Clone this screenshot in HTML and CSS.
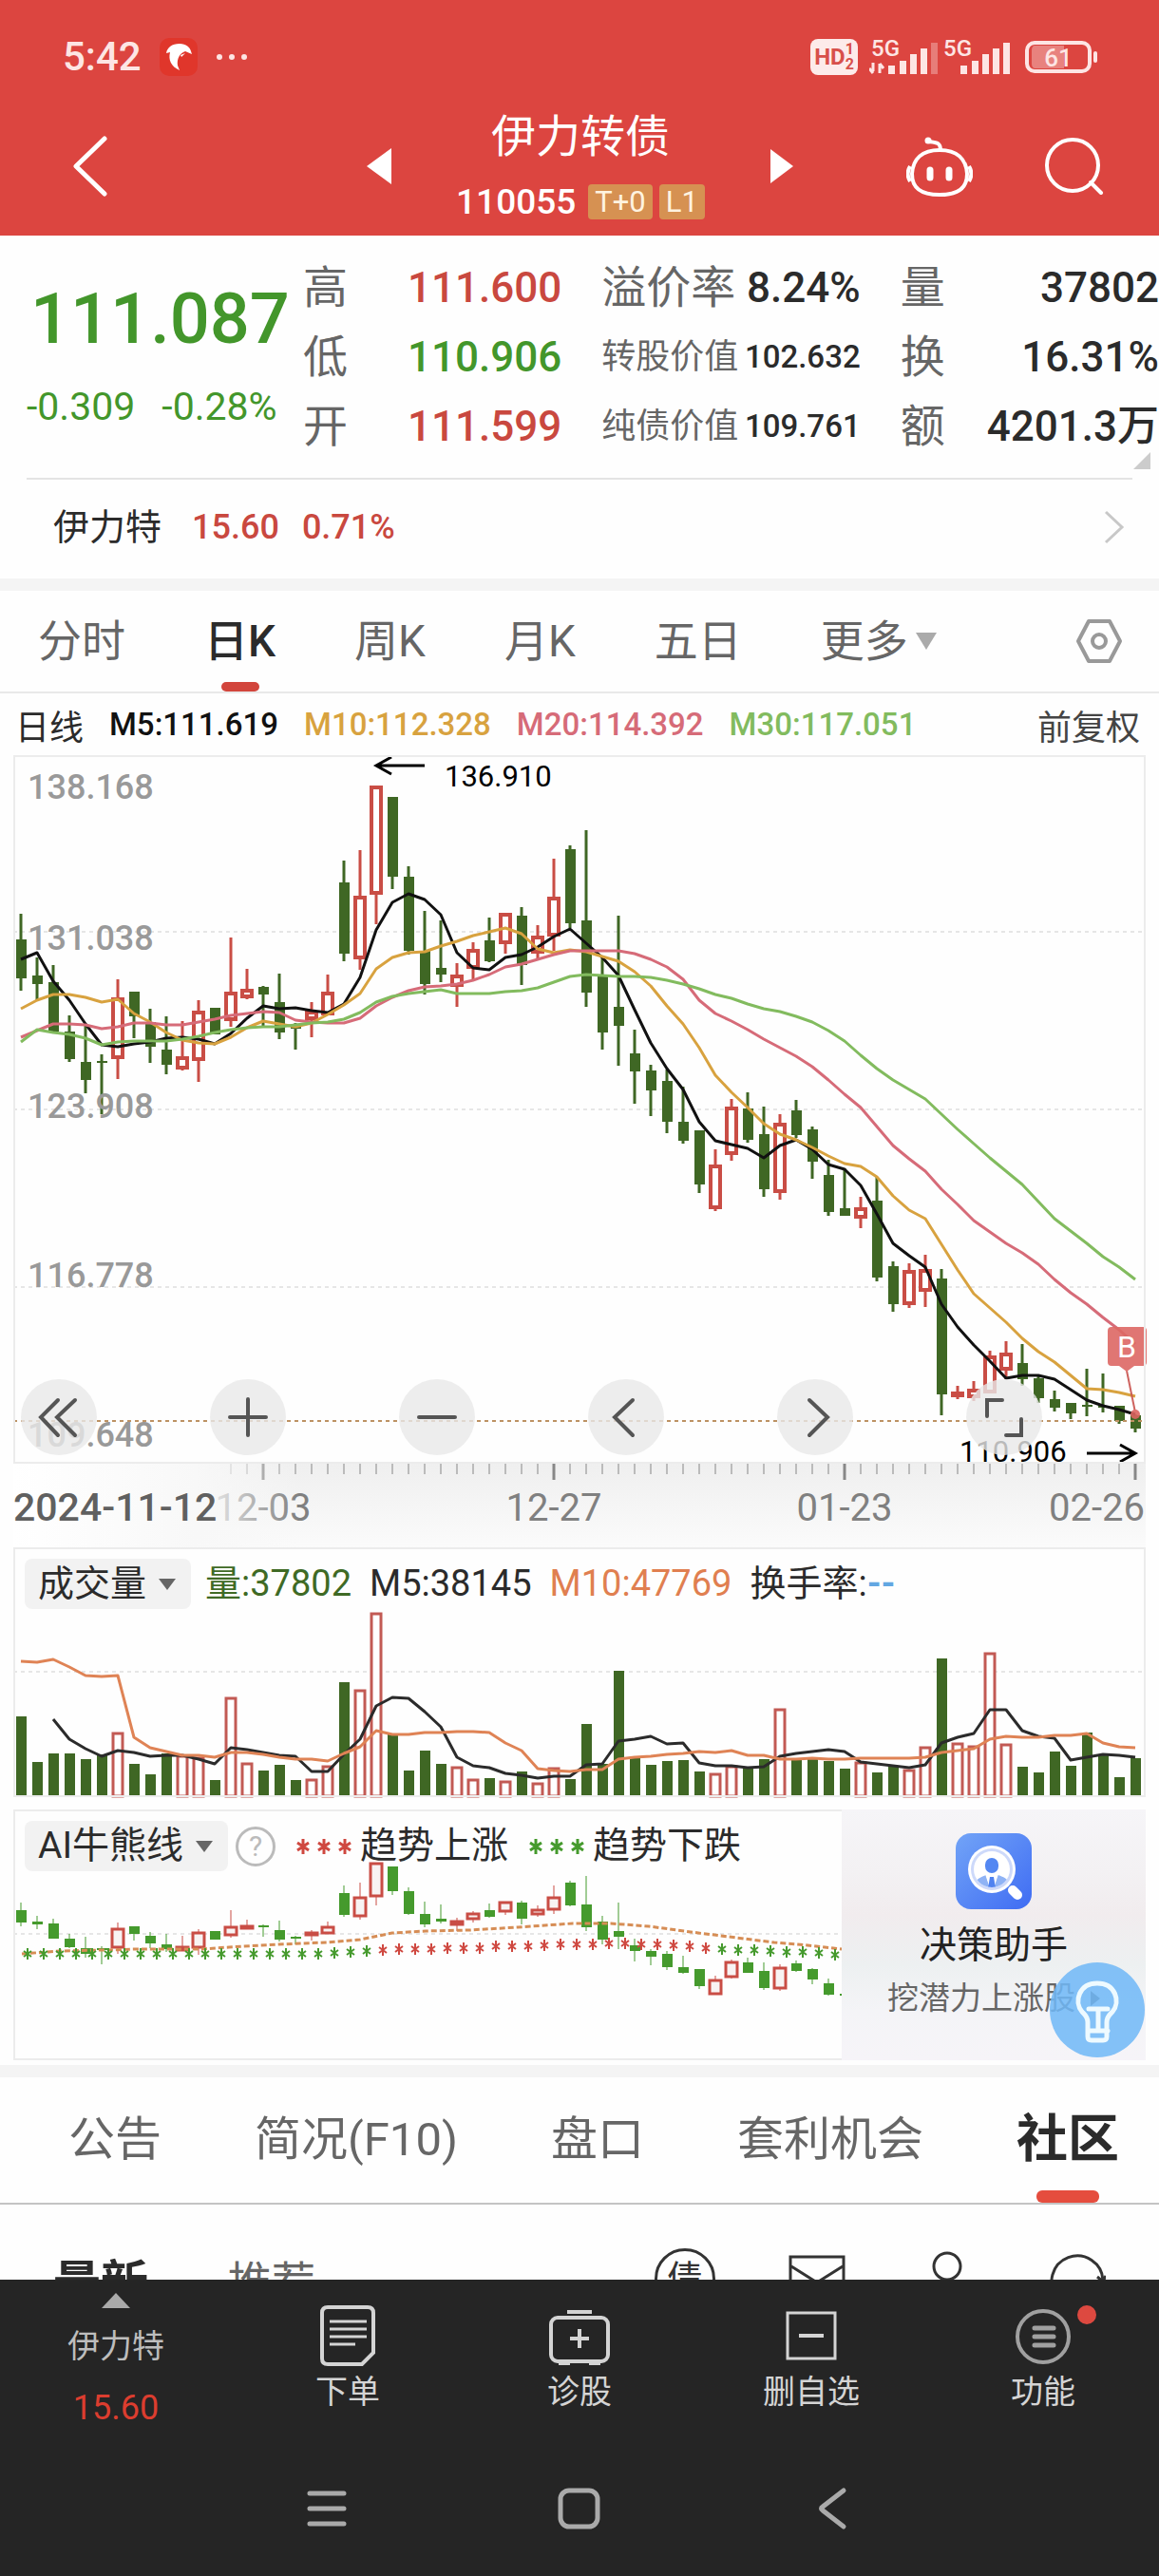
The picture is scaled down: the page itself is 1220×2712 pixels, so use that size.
FILE: index.html
```html
<!DOCTYPE html>
<html lang="zh-CN">
<head>
<meta charset="utf-8">
<meta name="viewport" content="width=device-width, initial-scale=1">
<title>伊力转债 110055</title>
<link rel="stylesheet" href="styles.css">
</head>
<body>
<div class="app">
  <header class="top">
    <div class="status">
      <div class="status-side">
        <span class="clock">5:42</span>
        <svg width="40" height="40" viewBox="0 0 40 40"><rect width="40" height="40" rx="10" fill="#e0362b"/><path d="M7 16C8 10 13 6 21 6c7 0 11 4 12 8l1 3-7-3c-6 2-9 8-8 15l2 5C12 30 9 23 11 15z" fill="#fff"/><path d="M22 18l5-2-4 4z" fill="#fff"/></svg>
        <svg width="34" height="8" viewBox="0 0 34 8" fill="#fde5e4"><circle cx="4" cy="4" r="3"/><circle cx="17" cy="4" r="3"/><circle cx="30" cy="4" r="3"/></svg>
      </div>
      <div class="status-side">
        <span class="hd">HD<span class="hd-num"><i>1</i><i>2</i></span></span>
        <span class="net"><b>5G</b>
          <svg width="72" height="38" viewBox="0 0 72 38" fill="#fde5e4"><path d="M4 25v9M0 31l4 5M11 36V26M11 26l4 5" stroke="#fde5e4" stroke-width="3" fill="none"/><rect x="20" y="28" width="7" height="9"/><rect x="32" y="23" width="7" height="14"/><rect x="43" y="16" width="7" height="21"/><rect x="54" y="10" width="7" height="27"/><rect x="65" y="4" width="7" height="33" opacity=".35"/></svg></span>
        <span class="net net-b"><b>5G</b>
          <svg width="72" height="38" viewBox="0 0 72 38" fill="#fde5e4"><rect x="20" y="28" width="7" height="9"/><rect x="32" y="23" width="7" height="14"/><rect x="43" y="16" width="7" height="21"/><rect x="54" y="10" width="7" height="27"/><rect x="65" y="4" width="7" height="33"/></svg></span>
        <span class="battery">61</span>
      </div>
    </div>
    <div class="titlebar">
      <button class="icon-btn back" aria-label="返回"><svg width="36" height="64" viewBox="0 0 36 64"><path d="M33 3L3 32l30 29" fill="none" stroke="#fff" stroke-width="5" stroke-linecap="round" stroke-linejoin="round"/></svg></button>
      <div class="title-mid">
        <button class="icon-btn" aria-label="上一只"><svg width="26" height="38" viewBox="0 0 26 38"><path d="M26 0v38L0 19z" fill="#fff"/></svg></button>
        <div class="title-text">
          <h1>伊力转债</h1>
          <p><span>110055</span><em>T+0</em><em>L1</em></p>
        </div>
        <button class="icon-btn" aria-label="下一只"><svg width="26" height="38" viewBox="0 0 26 38"><path d="M1 1v36l24-18z" fill="#fff"/></svg></button>
      </div>
      <div class="title-right">
        <button class="icon-btn" aria-label="智能助手"><svg width="70" height="66" viewBox="0 0 70 66" fill="none" stroke="#fff" stroke-width="4"><path d="M36 16C36 8 32 8 24 7"/><circle cx="23" cy="6" r="3.500" fill="#fff" stroke="none"/><path d="M35 16c18 0 28 9 29 25 0 15-9 22-29 22S6 56 6 41c1-16 11-25 29-25z"/><path d="M4 33c-3 5-3 11 0 16M66 33c3 5 3 11 0 16" stroke-width="4"/><path d="M25 37v8M45 37v8" stroke-width="7" stroke-linecap="round"/></svg></button>
        <button class="icon-btn" aria-label="搜索"><svg width="62" height="60" viewBox="0 0 62 60" fill="none" stroke="#fff" stroke-width="4"><circle cx="29" cy="29" r="27"/><path d="M48 47l11 11" stroke-linecap="round"/></svg></button>
      </div>
    </div>
  </header>

  <main class="content">
    <section class="quote">
      <div class="price">
        <strong>111.087</strong>
        <p><span>-0.309</span><span>-0.28%</span></p>
      </div>
      <dl>
        <div><dt>高</dt><dd class="up">111.600</dd></div>
        <div><dt>低</dt><dd class="down">110.906</dd></div>
        <div><dt>开</dt><dd class="up">111.599</dd></div>
      </dl>
      <dl>
        <div><dt>溢价率</dt><dd>8.24%</dd></div>
        <div class="small"><dt>转股价值</dt><dd>102.632</dd></div>
        <div class="small"><dt>纯债价值</dt><dd>109.761</dd></div>
      </dl>
      <dl>
        <div><dt>量</dt><dd>37802</dd></div>
        <div><dt>换</dt><dd>16.31%</dd></div>
        <div><dt>额</dt><dd>4201.3万</dd></div>
      </dl>
      <span class="corner"></span>
    </section>
    <a class="underlying" href="#stock">
      <span class="name">伊力特</span><span>15.60</span><span>0.71%</span>
      <svg width="22" height="36" viewBox="0 0 22 36"><path d="M2 2l17 16L2 34" fill="none" stroke="#c8c8c8" stroke-width="3"/></svg>
    </a>
    <div class="band"></div>

    <nav class="periods">
      <button>分时</button><button class="on">日K</button><button>周K</button><button>月K</button><button>五日</button><button class="more">更多<i class="caret"></i></button>
      <button class="settings" aria-label="设置"><svg width="50" height="48" viewBox="0 0 50 48" fill="none" stroke="#999" stroke-width="4"><path d="M14 3h22l11 21-11 21H14L3 24z" stroke-linejoin="round"/><circle cx="25" cy="24" r="7"/></svg></button>
    </nav>
    <div class="legend">
      <span class="l-day">日线</span><span class="l-5">M5:111.619</span><span class="l-10">M10:112.328</span><span class="l-20">M20:114.392</span><span class="l-30">M30:117.051</span><span class="l-adj">前复权</span>
    </div>

    <div class="charts">
      <div class="plot">
        <svg id="kline" viewBox="0 0 1192 746" role="img" aria-label="日K线"></svg>
        <div class="tools">
          <button aria-label="最早"><svg viewBox="0 0 80 80"><path d="M39 22L21 40l18 19M57 22L38 40l19 19"/></svg></button>
          <button aria-label="放大"><svg viewBox="0 0 80 80"><path d="M21 40h38M40 21v38"/></svg></button>
          <button aria-label="缩小"><svg viewBox="0 0 80 80"><path d="M21 40h38"/></svg></button>
          <button aria-label="左移"><svg viewBox="0 0 80 80"><path d="M47 22L28 40l19 19"/></svg></button>
          <button aria-label="右移"><svg viewBox="0 0 80 80"><path d="M34 22l19 18-19 19"/></svg></button>
          <button aria-label="全屏"><svg viewBox="0 0 80 80"><path d="M38 22H22v17M58 42v17H42"/></svg></button>
        </div>
      </div>
      <svg id="axis" viewBox="0 0 1192 88"></svg>

      <div class="panel volume">
        <div class="panel-head">
          <button class="tag">成交量<i class="caret"></i></button>
          <span class="v-now">量:37802</span><span>M5:38145</span><span class="v-10">M10:47769</span><span class="v-rate">换手率:<b>--</b></span>
        </div>
        <svg id="volume" viewBox="0 0 1192 198" role="img" aria-label="成交量"></svg>
      </div>

      <div class="panel ai">
        <div class="ai-main">
          <div class="panel-head">
            <button class="tag">AI牛熊线<i class="caret"></i></button>
            <button class="help" aria-label="说明">?</button>
            <span class="trend"><svg width="58" height="20" viewBox="0 0 58 20" stroke="#cf4840"><use href="#star" x="7" y="10"/><use href="#star" x="29" y="10"/><use href="#star" x="51" y="10"/></svg>趋势上涨</span>
            <span class="trend"><svg width="58" height="20" viewBox="0 0 58 20" stroke="#459a2d"><use href="#star" x="7" y="10"/><use href="#star" x="29" y="10"/><use href="#star" x="51" y="10"/></svg>趋势下跌</span>
          </div>
          <svg id="bullbear" viewBox="0 65 872 199" role="img" aria-label="AI牛熊线"></svg>
        </div>
        <a class="advisor" href="#advisor">
          <svg width="80" height="80" viewBox="0 0 80 80"><defs><linearGradient id="g" x1="0" y1="0" x2="1" y2="1"><stop offset="0" stop-color="#72a4f7"/><stop offset="1" stop-color="#3f6cf3"/></linearGradient><clipPath id="lens"><circle cx="38" cy="38" r="19"/></clipPath></defs><rect width="80" height="80" rx="16" fill="url(#g)"/><circle cx="38" cy="38" r="25" fill="#fff"/><circle cx="38" cy="38" r="22" fill="#cdd9fa"/><circle cx="38" cy="38" r="19" fill="#fff"/><g clip-path="url(#lens)"><path d="M18 60c0-10 8-14 14-16l4 14h4l4-14c8 2 14 6 14 16z" fill="#8fb3f5"/><path d="M31 43l5 15h4l5-15z" fill="#fff"/><path d="M36 46h4l2 12h-8z" fill="#4f82f0"/></g><rect x="31" y="26" width="14" height="16" rx="7" fill="#5387f2"/><path d="M60 60l5 5" stroke="#fff" stroke-width="10" stroke-linecap="round"/></svg>
          <strong>决策助手</strong>
          <span>挖潜力上涨股<i></i></span>
        </a>
        <button class="bulb" aria-label="提示"><svg width="100" height="100" viewBox="0 0 100 100" fill="none" stroke="#eefaff" stroke-width="5" stroke-linejoin="round" stroke-linecap="round"><path d="M40 63c0-6-3-8-6-11-9-11-3-30 16-30s25 19 16 30c-3 3-6 5-6 11v15c0 3-1 4-4 4H44c-3 0-4-1-4-4zM40 72h21M41 49h20M51 49v21"/></svg></button>
      </div>
    </div>
    <div class="band band-low"></div>

    <nav class="sections">
      <button>公告</button><button>简况(F10)</button><button>盘口</button><button>套利机会</button><button class="on">社区</button>
    </nav>
    <div class="feed">
      <button class="on">最新</button><button>推荐</button>
      <div class="feed-tools">
        <button class="debt">债</button>
        <button aria-label="私信"><svg width="60" height="64" viewBox="0 0 60 64"><path d="M2 9h56v46H2zM3 19l27 17 27-17"/></svg></button>
        <button aria-label="我的"><svg width="60" height="64" viewBox="0 0 60 64"><circle cx="30" cy="19" r="14"/><path d="M4 60c0-16 10-25 26-25s26 9 26 25"/></svg></button>
        <button aria-label="刷新"><svg width="60" height="64" viewBox="0 0 60 64"><path d="M57 34a27 27 0 1 0-4 15M51 30l6 5 3-6"/></svg></button>
      </div>
    </div>
  </main>

  <footer class="bottom">
    <nav class="actions">
      <a class="peer" href="#stock"><i></i><span>伊力特</span><b>15.60</b></a>
      <button><svg width="64" height="64" viewBox="0 0 64 64"><path d="M11 2h42c4 0 6 2 6 6v42L47 62H11c-4 0-6-2-6-6V8c0-4 2-6 6-6z"/><path d="M13 17h39M13 25h39M13 33h39M13 41h27" stroke-width="3"/></svg>下单</button>
      <button><svg width="64" height="64" viewBox="0 0 64 64"><rect x="2" y="13" width="60" height="46" rx="7"/><path d="M19 7h26M32 25v20M22 35h20M10 61h12M42 61h12"/></svg>诊股</button>
      <button><svg width="64" height="64" viewBox="0 0 64 64"><rect x="7" y="8" width="50" height="48" stroke-width="3"/><path d="M19 32h26"/></svg>删自选</button>
      <button class="dim"><svg width="64" height="64" viewBox="0 0 64 64"><circle cx="32" cy="33" r="27"/><path d="M23 24h20M23 33h20M23 42h20" stroke-width="5" stroke-linecap="round"/></svg>功能<i class="dot"></i></button>
    </nav>
    <nav class="system">
      <button aria-label="多任务"><svg width="48" height="48" viewBox="0 0 48 48"><path d="M6 8h36M6 24h36M6 40h36" stroke-width="5"/></svg></button>
      <button aria-label="主页"><svg width="48" height="48" viewBox="0 0 48 48"><rect x="4" y="5" width="39" height="38" rx="9" stroke-width="5"/></svg></button>
      <button aria-label="返回"><svg width="48" height="48" viewBox="0 0 48 48"><path d="M36 5L14 22c-2 1-2 3 0 4l22 17" stroke-width="5"/></svg></button>
    </nav>
  </footer>
</div>
<svg width="0" height="0" class="defs"><symbol id="star" overflow="visible"><path d="M0-8V8M-6-4L6 4M-6 4L6-4" stroke-width="3"/></symbol></svg>
<script src="charts.js"></script>
</body>
</html>
```
FILE: styles.css
```css
* { box-sizing: border-box; margin: 0; padding: 0; }
body { font-family: Roboto, "Noto Sans CJK SC", sans-serif; color: #2b2b2b; background: #fefefe; }
button { font: inherit; color: inherit; background: none; border: 0; cursor: pointer; }
a { color: inherit; text-decoration: none; }
i, em { font-style: normal; }
svg { display: block; flex: none; }
.defs { position: absolute; }
.app { height: 100vh; display: flex; flex-direction: column; }
.content { flex: 1; min-height: 0; overflow-y: auto; scrollbar-width: none; }
.up { color: #c9483f; }
.down { color: #43962b; }

/* header */
.top { background: #dc4540; color: #fff; height: 248px; flex: none; padding-top: 36px; }
.status { display: flex; justify-content: space-between; align-items: center; height: 48px; padding: 0 71px 0 66px; color: #fde5e4; }
.status-side { display: flex; align-items: center; gap: 19px; }
.clock { font-size: 42px; line-height: 48px; font-weight: 500; }
.hd { display: flex; align-items: center; justify-content: center; width: 50px; height: 38px; border-radius: 8px; background: #fdebea; color: #d8504b; font-size: 24px; font-weight: 700; }
.hd-num { font-size: 16px; line-height: 16px; display: flex; flex-direction: column; }
.status-side:last-child { gap: 12px; }
.net { position: relative; }
.net b { position: absolute; left: 2px; top: 0; font-size: 24px; line-height: 20px; font-weight: 500; }
.net-b { margin-left: -8px; }
.battery { width: 70px; height: 34px; border: 4px solid #fde5e4; border-radius: 10px; font-size: 26px; line-height: 26px; text-align: center; margin-left: 4px; position: relative; background: linear-gradient(90deg, #e8827e 61%, transparent 61%) content-box; padding: 1px 3px; font-weight: 500; }
.battery::after { content: ""; position: absolute; right: -10px; top: 7px; width: 4px; height: 12px; border-radius: 2px; background: #fde5e4; }
.titlebar { display: grid; grid-template-columns: 1fr auto 1fr; align-items: center; height: 164px; padding: 18px 58px 0 60px; }
.icon-btn { display: block; }
.back { justify-self: start; margin-left: 17px; }
.title-mid { display: flex; align-items: center; gap: 68px; }
.title-text { text-align: center; width: 262px; display: flex; flex-direction: column; align-items: center; padding-top: 6px; }
.title-text h1 { font-size: 47px; line-height: 68px; font-weight: 400; }
.title-text p { display: flex; gap: 7px; align-items: center; height: 68px; font-size: 37px; font-weight: 500; }
.title-text p span { margin-right: 6px; }
.title-text em { background: #d69152; border-radius: 4px; font-size: 31px; line-height: 37px; padding: 0 7px; font-weight: 400; color: #fff3e0; }
.title-right { display: flex; justify-content: flex-end; align-items: center; gap: 76px; }

/* quote */
.quote { display: flex; gap: 42px; position: relative; padding: 18px 0; }
.price { width: 277px; flex: none; padding-left: 32px; color: #43962b; white-space: nowrap; }
.price strong { display: block; font-size: 74px; line-height: 88px; padding-top: 26px; font-weight: 500; }
.price p { display: flex; gap: 28px; font-size: 41px; line-height: 48px; margin-top: 24px; margin-left: -4px; }
.quote dl { flex: 1; }
.quote dl div { display: flex; justify-content: space-between; align-items: center; height: 73px; white-space: nowrap; }
.quote dt { font-size: 47px; line-height: 72px; color: #666; }
.quote dd { font-size: 44px; line-height: 72px; font-weight: 500; }
.quote .small dt { font-size: 36px; }
.quote .small dd { font-size: 33px; }
.corner { position: absolute; right: 9px; bottom: 9px; border-left: 18px solid transparent; border-bottom: 18px solid #ccc; }
.underlying { display: flex; align-items: center; gap: 24px; height: 106px; margin: 0 28px; padding: 0 8px 4px 28px; border-top: 2px solid #e4e4e4; font-size: 36px; line-height: 48px; font-weight: 500; color: #c9483f; }
.underlying .name { font-size: 38px; color: #2b2b2b; font-weight: 400; margin-right: 8px; }
.underlying svg { margin-left: auto; }
.band { height: 13px; background: #f4f4f4; }

/* period tabs */
.periods { display: flex; align-items: center; gap: 83px; height: 108px; padding: 0 38px 0 40px; border-bottom: 2px solid #e9e9e9; font-size: 46px; color: #666; }
.periods button { line-height: 106px; height: 106px; display: flex; align-items: center; }
.periods .on { color: #2b2b2b; font-weight: 500; position: relative; }
.periods .on::after { content: ""; position: absolute; left: calc(50% - 20px); bottom: 0; width: 40px; height: 10px; border-radius: 5px; background: #d2453c; }
.caret { border: 11px solid transparent; border-top: 18px solid #aaa; border-bottom: 0; }
.more .caret { margin-left: 8px; }
.settings { margin-left: auto; }
.legend { display: flex; align-items: center; height: 65px; padding: 0 20px 0 16px; gap: 27px; font-size: 33px; font-weight: 500; white-space: nowrap; }
.l-day, .l-adj { font-size: 36px; font-weight: 400; }
.l-5 { color: #111; }
.l-10 { color: #d8a23f; }
.l-20 { color: #d66b78; }
.l-30 { color: #82bb5e; }
.l-adj { margin-left: auto; color: #444; }

/* charts */
.charts { padding: 0 14px; }
.charts #kline, .charts #axis, .charts #volume, .charts #bullbear { width: 100%; height: auto; overflow: visible; }
.plot { position: relative; outline: 2px solid #ececec; outline-offset: -2px; }
.tools { position: absolute; left: 8px; right: 109px; bottom: 9px; display: flex; justify-content: space-between; }
.tools button { width: 80px; height: 80px; border-radius: 50%; background: rgba(232, 232, 232, .8); }
.tools path { fill: none; stroke: #555; stroke-width: 4; stroke-linecap: round; }
.panel { outline: 2px solid #ececec; outline-offset: -2px; }
.panel-head { display: flex; align-items: center; height: 65px; padding: 12px 0 0 12px; font-size: 38px; line-height: 53px; white-space: nowrap; }
.tag { display: flex; align-items: center; height: 53px; padding: 0 16px 0 14px; gap: 13px; border-radius: 8px; background: #f2f2f2; }
.tag .caret { border-width: 9px; border-top: 12px solid #666; border-bottom: 0; }
.volume { margin-bottom: 13px; }
.volume .panel-head { gap: 19px; }
.ai .panel-head { font-size: 39px; }
.v-now { color: #3f6a25; margin-left: -4px; }
.v-10 { color: #e07f50; }
.v-rate b { color: #62a7e2; }
.ai { display: flex; position: relative; }
.ai-main { flex: 872; min-width: 0; }
.help { width: 42px; height: 42px; border: 3px solid #bbb; border-radius: 50%; color: #bbb; font-size: 30px; line-height: 34px; margin: 0 22px 0 8px; }
.trend { display: flex; align-items: center; gap: 9px; margin-right: 22px; }
.advisor { flex: 320; min-width: 0; position: relative; display: flex; flex-direction: column; align-items: center; padding-top: 25px; background: linear-gradient(180deg, #f6f5f8 0%, #f3f1f3 25%, #f1ecee 42%, #edf0f1 62%, #f4f4f7 80%, #f6f4f8 100%); }
.advisor strong { font-size: 39px; line-height: 48px; font-weight: 400; color: #222; margin-top: 14px; }
.advisor span { font-size: 33px; line-height: 40px; color: #666; margin-top: 12px; display: flex; align-items: center; gap: 16px; }
.advisor i { border: 8px solid transparent; border-left: 10px solid #666; border-right: 0; }
.bulb { position: absolute; right: 1px; bottom: 3px; border-radius: 50%; background: rgba(112, 184, 247, .86); }

/* lower tabs */
.band-low { margin-top: 5px; }
.sections { display: flex; gap: 98px; height: 134px; padding-left: 72px; font-size: 49px; color: #666; border-bottom: 2px solid #c4c4c4; white-space: nowrap; }
.sections button { height: 132px; line-height: 132px; }
.sections .on { font-size: 54px; font-weight: 700; color: #2b2b2b; position: relative; }
.sections .on::after { content: ""; position: absolute; left: calc(50% - 33px); bottom: 0; width: 66px; height: 13px; border-radius: 6px; background: #e54d3e; }
.feed { display: flex; align-items: center; height: 156px; padding: 0 56px; gap: 84px; font-size: 46px; color: #666; }
.feed .on { font-size: 50px; font-weight: 700; color: #2b2b2b; }
.feed-tools { display: flex; align-items: center; margin-left: auto; gap: 77px; }
.feed-tools path, .feed-tools circle { fill: none; stroke: #333; stroke-width: 3; }
.debt { width: 64px; height: 64px; border: 3px solid #333; border-radius: 50%; font-size: 38px; line-height: 56px; color: #333; }

/* bottom bars */
.bottom { flex: none; height: 312px; background: #252525; color: #d4d4d4; }
.actions { display: flex; height: 180px; font-size: 34px; }
.actions > * { flex: 1; display: flex; flex-direction: column; align-items: center; gap: 2px; padding-top: 27px; line-height: 50px; position: relative; }
.actions svg { fill: none; stroke: #d4d4d4; stroke-width: 4; }
.actions .dim svg { stroke: #a0a0a0; }
.actions .peer { padding-top: 14px; gap: 15px; color: #bdbdbd; }
.peer i { border: 15px solid transparent; border-bottom: 16px solid #aaa; border-top: 0; }
.peer b { color: #dc3d2f; font-size: 36px; font-weight: 400; }
.dot { position: absolute; left: calc(50% + 36px); top: 27px; width: 20px; height: 20px; border-radius: 50%; background: #dd4940; }
.system { display: flex; justify-content: center; gap: 218px; padding-top: 37px; }
.system svg { fill: none; stroke: #aaa; stroke-linecap: round; }
```
FILE: charts.js
```js
// Each candle: [direction, high, bodyTop, bodyBottom, low] in plot units.
const candles = [
  ['g',167,194,235,248],['g',213,232,241,258],['g',221,239,291,291],['g',274,291,320,323],['g',285,323,342,356],
  ['g',315,322,324,378],['r',236,257,318,341],['g',249,249,275,298],['g',267,281,307,324],['g',275,310,326,336],
  ['r',280,319,329,332],['r',258,271,320,344],['g',266,266,294,294],['r',192,251,278,286],['r',225,248,254,257],
  ['g',243,244,252,285],['g',230,260,292,299],['g',282,283,288,310],['r',260,271,277,297],['r',231,251,272,272],
  ['g',111,134,209,217],['r',100,150,213,226],['r',34,34,145,178],['g',44,44,128,141],['g',117,128,206,210],
  ['g',164,206,241,252],['g',174,224,231,239],['r',219,233,242,265],['r',197,206,223,236],['g',171,195,217,218],
  ['r',168,168,197,209],['g',160,169,221,242],['r',179,192,207,215],['r',109,151,189,206],['g',95,99,177,182],
  ['g',79,174,250,265],['g',212,233,292,310],['g',169,265,285,327],['g',289,314,333,367],['g',326,332,353,380],
  ['g',331,343,386,398],['g',349,386,406,409],['g',395,395,452,461],['r',415,433,476,480],['r',362,372,419,427],
  ['g',355,372,405,408],['g',370,399,457,465],['r',378,389,459,468],['g',363,374,400,403],['g',391,394,428,446],
  ['g',426,442,481,485],['g',435,477,485,485],['r',465,478,486,498],['g',444,469,550,554],['g',533,538,578,586],
  ['r',535,544,577,582],['r',526,543,563,581],['g',541,551,673,695],['r',664,672,674,678],['r',659,669,675,680],
  ['r',627,634,670,670],['r',617,631,646,657],['g',620,640,657,664],['g',653,656,677,682],['g',669,678,687,691],
  ['g',682,682,693,699],['g',646,684,686,696],['g',651,685,687,692],['g',685,685,701,704],['g',694,695,709,713]
];
const averages = {
  '#111': [215,208,238,258,283,305,307,304,302,298,297,299,304,293,277,264,267,266,269,271,262,234,184,155,146,152,168,208,224,226,213,210,202,191,183,198,213,232,268,303,330,352,386,406,410,414,424,411,405,415,431,436,453,483,514,527,539,578,602,621,638,656,653,653,657,668,679,685,689,694],
  '#d8a23f': [267,258,252,252,255,260,257,272,281,292,300,303,304,297,287,280,283,286,282,273,263,251,225,213,208,207,201,196,190,186,182,188,204,208,205,207,212,217,228,243,264,283,308,337,355,371,388,399,405,413,422,430,433,444,464,479,488,515,542,567,582,597,614,628,639,653,667,668,671,675],
  '#d66b78': [297,290,283,283,284,288,286,282,282,284,284,281,278,274,272,270,271,279,281,282,282,277,264,255,248,244,243,241,237,231,223,220,215,210,206,206,206,206,209,215,223,236,258,272,280,289,299,308,317,328,342,357,371,391,411,425,438,457,473,490,502,514,524,536,552,566,578,592,605,620],
  '#82bb5e': [302,289,292,294,298,305,302,301,301,301,299,296,292,289,287,286,286,284,282,281,278,271,260,254,251,249,247,251,251,251,249,248,245,239,233,231,232,233,233,234,237,241,246,252,256,262,267,270,275,281,290,301,316,330,342,352,362,378,394,409,424,438,452,470,488,501,514,528,539,552]
};
const volumes = [85,37,46,46,40,45,67,35,24,46,43,41,18,104,35,28,34,18,18,32,121,112,193,66,28,49,35,31,18,20,16,27,14,30,19,77,35,133,41,34,38,39,27,24,32,30,40,92,40,40,38,30,36,26,33,28,52,146,56,53,151,55,32,26,48,33,68,45,21,41];
const volume5 = [82,61,51,43,49,47,43,44,44,40,35,52,50,47,44,43,27,27,45,61,96,105,104,90,74,42,33,31,25,23,20,22,22,34,35,59,61,64,56,57,36,33,33,31,32,43,46,48,50,48,37,35,33,31,34,57,63,67,92,92,70,64,62,39,42,45,44,42];
const volume10 = [143,142,145,137,128,127,128,63,52,48,44,44,42,47,47,45,42,40,40,38,46,53,70,66,66,68,68,69,69,68,57,49,30,28,27,29,29,40,42,43,45,46,48,47,49,44,44,40,40,41,40,40,41,41,41,41,42,47,49,51,61,64,63,63,65,65,67,57,53,52];

const STEP = 17;
const cx = i => 8 + STEP * i;
const $ = id => document.getElementById(id);
const points = (list, y, from = 0) => list.map((v, i) => `${cx(i + from)},${y(v)}`).join(' ');
const grid = (y, w) => `<path d="M0 ${y}H${w}" stroke="#e6e6e6" stroke-width="2" stroke-dasharray="4 4"/>`;
const line = (pts, color, w = 3) => `<polyline points="${pts}" fill="none" stroke="${color}" stroke-width="${w}" stroke-linejoin="round"/>`;

// Daily candles
const label = (y, t) => `<text x="15" y="${y}" font-size="36" font-weight="500" fill="#999">${t}</text>`;
let k = [186, 373, 560].map(y => grid(y, 1192)).join('');
candles.forEach(([d, h, t, b, l], i) => {
  const x = cx(i);
  if (d === 'g') {
    k += `<path d="M${x} ${h}V${l}" stroke="#3f6724" stroke-width="3"/><rect x="${x - 5}" y="${t}" width="11" height="${b - t}" fill="#3f6724"/>`;
  } else {
    k += `<path d="M${x} ${h}V${t}M${x} ${b}V${l}" stroke="#c94d45" stroke-width="3"/><rect x="${x - 5}" y="${t}" width="10" height="${b - t}" fill="#fff" stroke="#c94d45" stroke-width="4"/>`;
  }
});
k += `<path d="M0 701H1192" stroke="#bd9263" stroke-width="2" stroke-dasharray="4 4"/>`;
k += label(46, '138.168') + label(205, '131.038') + label(382, '123.908') + label(560, '116.778') + label(728, '109.648');
for (const color in averages) k += line(points(averages[color], v => v), color);
k += `<g fill="none" stroke="#000" stroke-width="3"><path d="M433 11H382M398 2L382 11l16 9M1130 735h51M1165 726l16 9-16 9"/></g>
<text x="454" y="33" font-size="31" fill="#000">136.910</text><text x="996" y="744" font-size="31" fill="#000">110.906</text>
<g opacity=".9"><path d="M1172 648l9 44" stroke="#c9534e" stroke-width="2"/><circle cx="1181" cy="694" r="5" fill="#dc6460"/><path d="M1156 602h33q4 0 4 4v33q0 4-4 4h-9l-8 6-8-6h-8q-4 0-4-4v-33q0-4 4-4z" fill="#dd6864"/></g>
<text x="1172" y="634" font-size="32" fill="#fff" text-anchor="middle">B</text>`;
$('kline').innerHTML = k;

// Date axis
let a = `<defs><linearGradient id="v" x2="0" y2="1"><stop offset="0" stop-color="#efefef"/><stop offset="1" stop-color="#fbfbfb"/></linearGradient>
<linearGradient id="fade"><stop offset="0" stop-color="#fff"/><stop offset=".64" stop-color="#f8f8f8"/><stop offset="1" stop-color="#f8f8f8" stop-opacity="0"/></linearGradient></defs>
<rect width="1192" height="88" fill="url(#v)"/>`;
for (let x = 229; x <= 1181; x += STEP) {
  a += (x - 263) % 306 === 0 ? `<path d="M${x} 0v17" stroke="#888" stroke-width="3"/>` : `<path d="M${x} 0v11" stroke="#bbb" stroke-width="2"/>`;
}
a += `<g font-size="40" fill="#808080"><text x="263" y="60" text-anchor="middle">12-03</text><text x="569" y="60" text-anchor="middle">12-27</text><text x="875" y="60" text-anchor="middle">01-23</text><text x="1191" y="60" text-anchor="end">02-26</text></g>
<rect width="300" height="88" fill="url(#fade)"/><text x="0" y="60" font-size="41" font-weight="500" fill="#606060">2024-11-12</text>`;
$('axis').innerHTML = a;

// Volume
let v = grid(66, 1192) + '<path d="M0 197H1192" stroke="#ececec" stroke-width="2"/>';
volumes.forEach((h, i) => {
  v += candles[i][0] === 'g'
    ? `<rect x="${cx(i) - 5}" y="${198 - h}" width="11" height="${h}" fill="#3f6724"/>`
    : `<rect x="${cx(i) - 5}" y="${198 - h}" width="10" height="${h - 1}" fill="#fff" stroke="#c25a54" stroke-width="3"/>`;
});
v += line(points(volume5, h => 198 - h, 2), '#2b2b2b', 3) + line(points(volume10, h => 198 - h), '#df8355', 3);
$('volume').innerHTML = v;

// Bull / bear line reuses the same candles at a smaller scale
const sy = y => Math.round(46 + y * 0.31);
const stars = [...Array(19).fill(152),151,150,149,148,147,147,147,146,146,146,144,144,144,143,142,142,142,141,141,142,142,143,144,146,147,148,148,149,150,150,151,153];
let s = grid(131, 872);
candles.slice(0, 52).forEach(([d, h, t, b, l], i) => {
  const x = cx(i), height = Math.max(2, sy(b) - sy(t));
  s += d === 'g'
    ? `<path d="M${x} ${sy(h)}V${sy(l)}" stroke="#459a2d" stroke-width="1"/><rect x="${x - 5}" y="${sy(t)}" width="11" height="${height}" fill="#459a2d"/>`
    : `<path d="M${x} ${sy(h)}V${sy(l)}" stroke="#c94d45" stroke-width="1"/><rect x="${x - 6}" y="${sy(t)}" width="12" height="${height}" fill="#f8f3f3" stroke="#c94d45" stroke-width="3"/>`;
});
s += '<polyline points="9,152 49,149 95,148 130,147 198,147 227,145 279,142 330,140 365,137 399,130 434,128 480,127 531,124 589,120 629,120 669,123 721,130 761,135 801,140 836,143 872,147" fill="none" stroke="#d68d55" stroke-width="3" stroke-dasharray="6 3"/>';
stars.forEach((y, i) => {
  const x = 15 + STEP * i, red = i > 21 && i < 43;
  s += `<path d="M${x} ${y - 6}v12M${x - 4} ${y - 3}l8 6M${x - 4} ${y + 3}l8-6" stroke="${red ? '#cf4840' : '#459a2d'}" stroke-width="2"/>`;
});
$('bullbear').innerHTML = s;
```
